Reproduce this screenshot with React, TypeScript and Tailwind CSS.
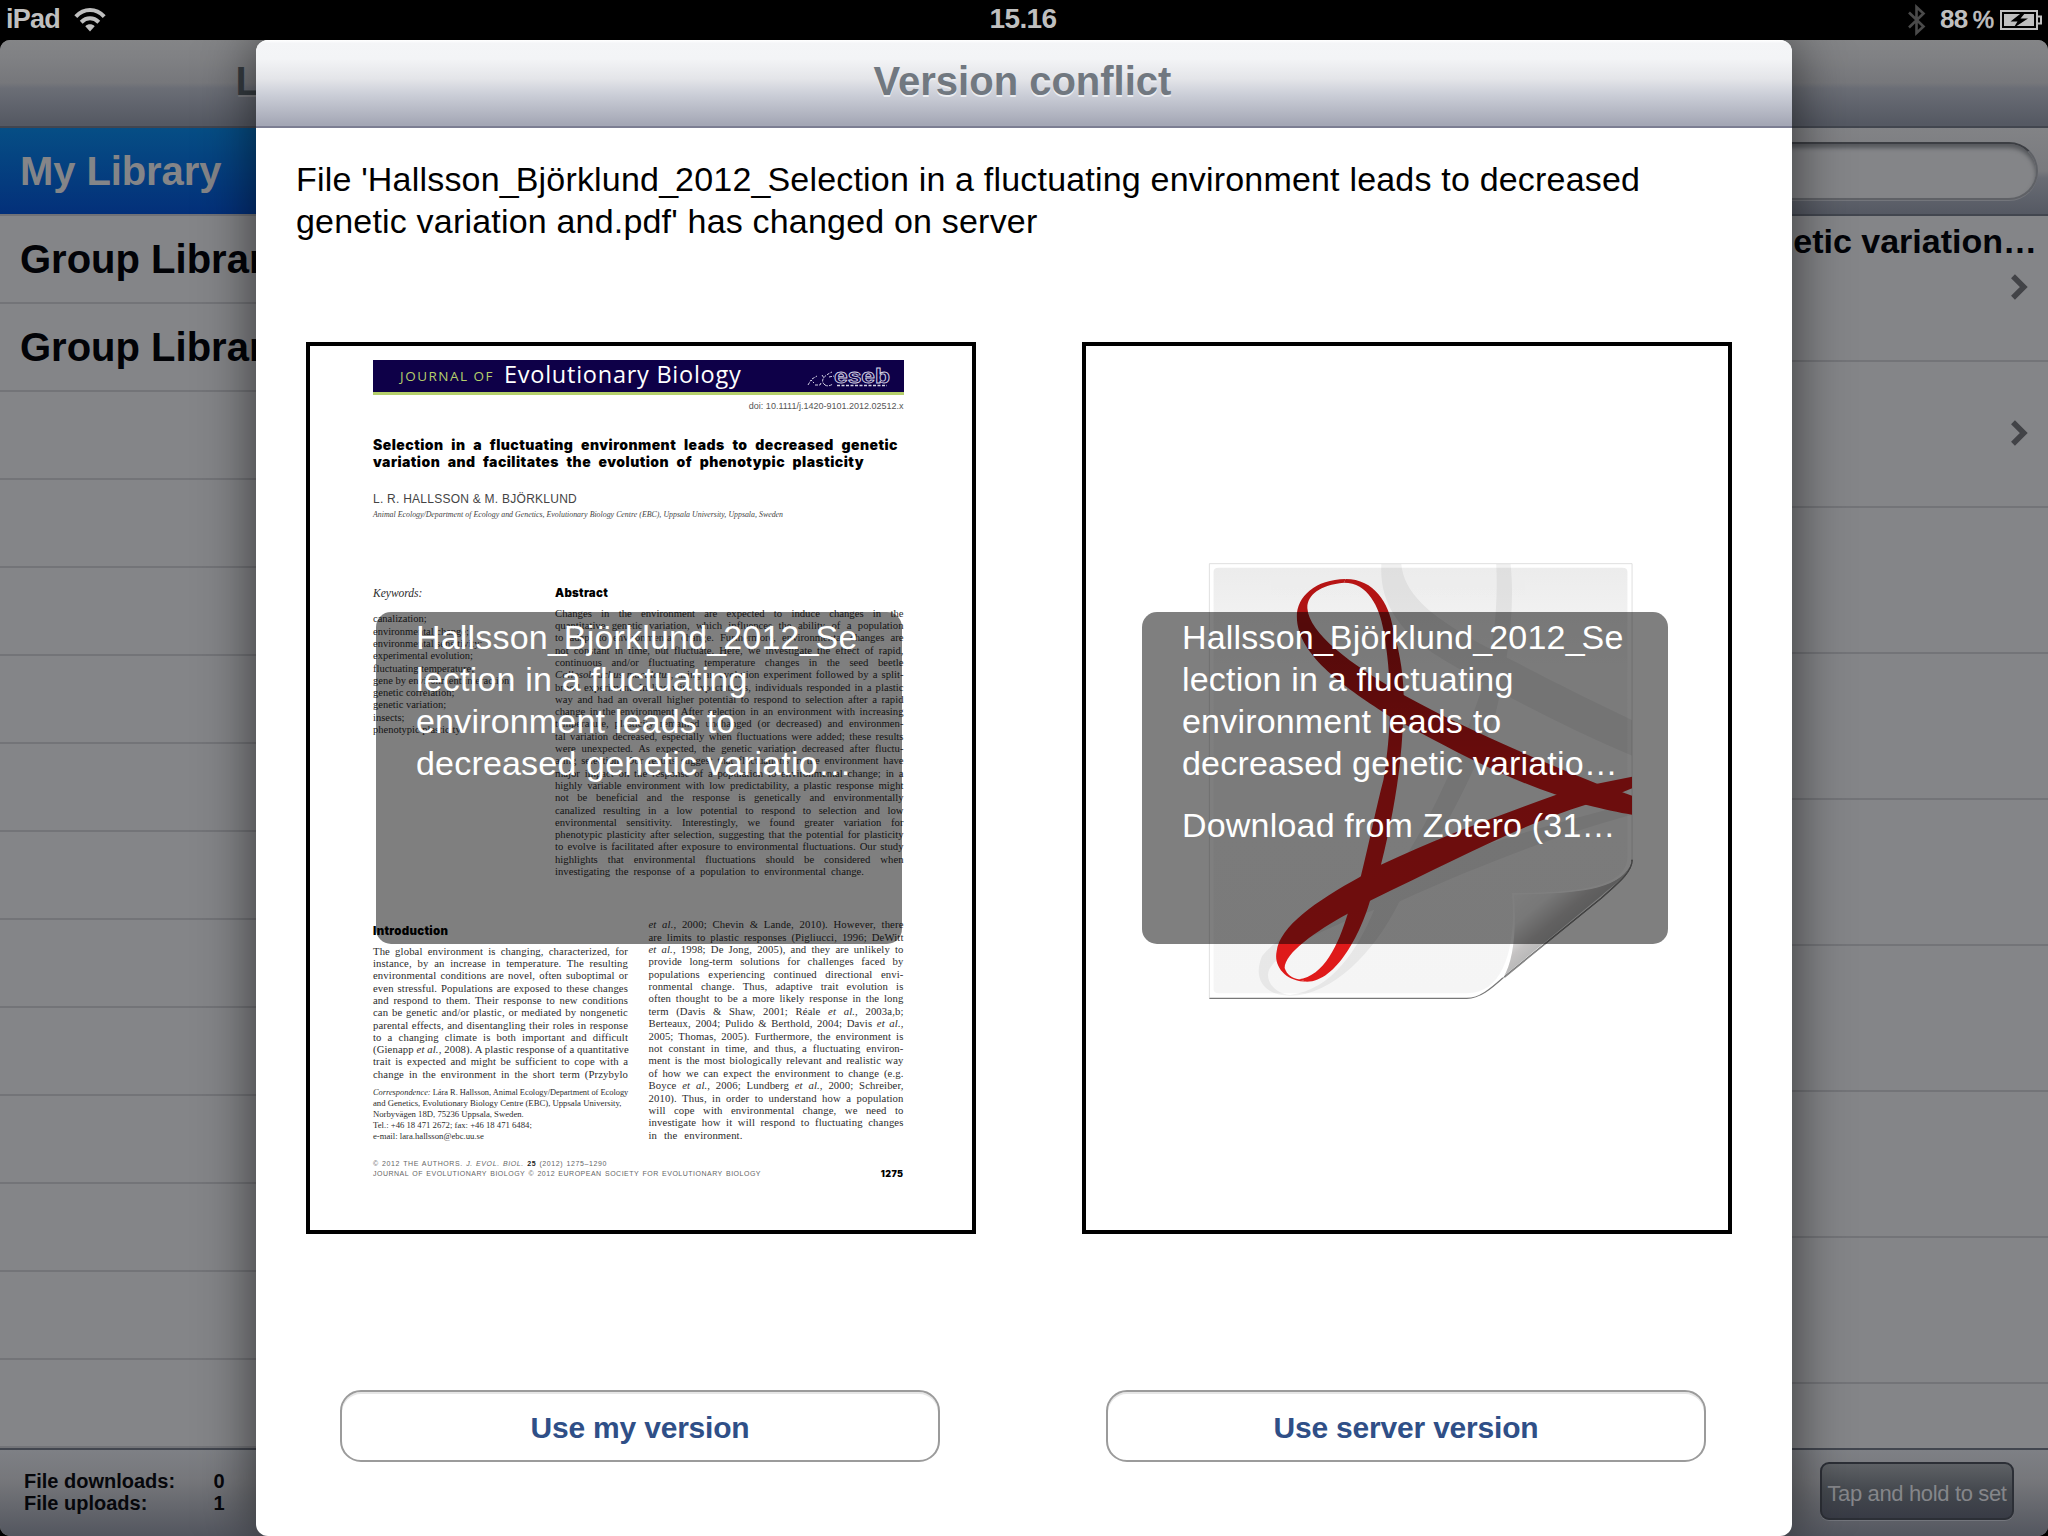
import React from "react";

const sans = "font-['Liberation_Sans',Arial,sans-serif]";
const serif = "font-['Liberation_Serif','Times_New_Roman',serif]";
const heavy = "font-['Inter',sans-serif] font-black";

const I = ({ children }: { children: React.ReactNode }) => <i className="italic">{children}</i>;

const abstractLines: React.ReactNode[] = [
  "Changes in the environment are expected to induce changes in the",
  "quantitative genetic variation, which influences the ability of a population",
  "to adapt to environmental change. Furthermore, environmental changes are",
  "not constant in time, but fluctuate. Here, we investigate the effect of rapid,",
  "continuous and/or fluctuating temperature changes in the seed beetle",
  <><I>Callosobruchus maculatus</I>, using an evolution experiment followed by a split-</>,
  "brood experiment. In line with expectations, individuals responded in a plastic",
  "way and had an overall higher potential to respond to selection after a rapid",
  "change in the environment. After selection in an environment with increasing",
  "temperature, plasticity remained unchanged (or decreased) and environmen-",
  "tal variation decreased, especially when fluctuations were added; these results",
  "were unexpected. As expected, the genetic variation decreased after fluctu-",
  "ating selection. Our results suggest that fluctuations in the environment have",
  "major impact on the response of a population to environmental change; in a",
  "highly variable environment with low predictability, a plastic response might",
  "not be beneficial and the response is genetically and environmentally",
  "canalized resulting in a low potential to respond to selection and low",
  "environmental sensitivity. Interestingly, we found greater variation for",
  "phenotypic plasticity after selection, suggesting that the potential for plasticity",
  "to evolve is facilitated after exposure to environmental fluctuations. Our study",
  "highlights that environmental fluctuations should be considered when",
];

const keywords = [
  "canalization;",
  "environmental change;",
  "environmental sensitivity;",
  "experimental evolution;",
  "fluctuating temperature;",
  "gene by environment interaction;",
  "genetic correlation;",
  "genetic variation;",
  "insects;",
  "phenotypic plasticity.",
];

const introLeft: React.ReactNode[] = [
  "The global environment is changing, characterized, for",
  "instance, by an increase in temperature. The resulting",
  "environmental conditions are novel, often suboptimal or",
  "even stressful. Populations are exposed to these changes",
  "and respond to them. Their response to new conditions",
  "can be genetic and/or plastic, or mediated by nongenetic",
  "parental effects, and disentangling their roles in response",
  "to a changing climate is both important and difficult",
  <>(Gienapp <I>et al.</I>, 2008). A plastic response of a quantitative</>,
  "trait is expected and might be sufficient to cope with a",
  "change in the environment in the short term (Przybylo",
];

const introRight: React.ReactNode[] = [
  <><I>et al.</I>, 2000; Chevin &amp; Lande, 2010). However, there</>,
  "are limits to plastic responses (Pigliucci, 1996; DeWitt",
  <><I>et al.</I>, 1998; De Jong, 2005), and they are unlikely to</>,
  "provide long-term solutions for challenges faced by",
  "populations experiencing continued directional envi-",
  "ronmental change. Thus, adaptive trait evolution is",
  "often thought to be a more likely response in the long",
  <>term (Davis &amp; Shaw, 2001; Réale <I>et al.</I>, 2003a,b;</>,
  <>Berteaux, 2004; Pulido &amp; Berthold, 2004; Davis <I>et al.</I>,</>,
  "2005; Thomas, 2005). Furthermore, the environment is",
  "not constant in time, and thus, a fluctuating environ-",
  "ment is the most biologically relevant and realistic way",
  "of how we can expect the environment to change (e.g.",
  <>Boyce <I>et al.</I>, 2006; Lundberg <I>et al.</I>, 2000; Schreiber,</>,
  "2010). Thus, in order to understand how a population",
  "will cope with environmental change, we need to",
  "investigate how it will respond to fluctuating changes",
];

function Lines({ lines, last, lastWidth }: { lines: React.ReactNode[]; last?: string; lastWidth?: string }) {
  return (
    <>
      {lines.map((l, i) => (
        <div key={i} className="whitespace-nowrap [text-align-last:justify]">{l}</div>
      ))}
      {last && <div className={`whitespace-nowrap [text-align-last:justify] ${lastWidth ?? ""}`}>{last}</div>}
    </>
  );
}

/* Body text whose underscores are set tighter than the letters. */
function Name({ text }: { text: string }) {
  return (
    <>
      {text.split("_").map((part, i) => (
        <React.Fragment key={i}>
          {i > 0 && <span className="tracking-[-3px]">_</span>}
          {part}
        </React.Fragment>
      ))}
    </>
  );
}

function StatusBar() {
  return (
    <header className="flex h-10 items-center justify-between bg-black pl-[6px] pr-[6px] text-[28px] font-bold text-[#bfbfbf]">
      <div className="flex w-[400px] items-center">
        <span className="relative -top-px w-[55px] text-[27px] tracking-[-0.8px]">iPad</span>
        <svg className="ml-[13px] h-6 w-8" viewBox="0 0 32 24" fill="none" stroke="#bfbfbf" strokeWidth="4">
          <path d="M1.8 8.6C10-.2 22-.2 30.200 8.600" />
          <path d="M7.200 14.200C12.500 9 19.500 9 24.800 14.200" />
          <path d="M16 23.500L11.300 18.200C14 15.600 18 15.600 20.700 18.200Z" fill="#bfbfbf" stroke="none" />
        </svg>
      </div>
      <span className="relative -top-px right-px tracking-[-0.6px]">15.16</span>
      <div className="flex w-[400px] items-center justify-end">
        <svg className="mr-[13px] h-8 w-5" viewBox="0 0 20 32" fill="none" stroke="#4a4a4a" strokeWidth="2.600">
          <path d="M2 8.500L16.500 22.500L9.500 29V3L16.500 9.500L2 23.500" />
        </svg>
        <div className="relative -top-px mr-[6px] flex items-baseline gap-[5px] whitespace-nowrap text-[26px]">
          <span className="tracking-[-0.6px]">88</span>
          <span className="text-[24px] font-normal [-webkit-text-stroke:0.7px_#bfbfbf]">%</span>
        </div>
        <svg className="h-5 w-[42px]" viewBox="0 0 42 20">
          <path d="M1 1H37V19H1Z" fill="none" stroke="#bfbfbf" strokeWidth="2" />
          <path d="M4 4H34V16H4Z" fill="#bfbfbf" />
          <path d="M38 6.500H41V13.500H38" fill="none" stroke="#bfbfbf" strokeWidth="2" />
          <path d="M22 2.500L10.500 11.500H17.500L13.500 18L28 8.500H20.500L25.500 2.500Z" fill="#000" />
        </svg>
      </div>
    </header>
  );
}

const NAV_BG = "bg-[linear-gradient(180deg,#848587_0%,#808184_20%,#76777b_50%,#6b6e76_56%,#555963_97%)]";

function Sidebar() {
  return (
    <aside className="flex w-[640px] flex-col bg-[#848588]">
      <div className={`flex h-[88px] items-center justify-center border-b-2 border-[#42454f] pb-[5px] text-[40px] font-bold text-[#363c41] ${NAV_BG} [text-shadow:0_2px_0_#7d7e82]`}>
        Libraries
      </div>
      <div className="flex h-[88px] items-center border-b-2 border-[#717277] bg-[linear-gradient(180deg,#064e85,#03307a)] pl-5 text-[40px] font-bold tracking-[-0.1px] text-[#848588]">
        My Library
      </div>
      {["Group Library", "Group Library", "", "", "", "", "", "", "", "", "", "", "", ""].map((t, i) => (
        <div key={i} className="flex h-[88px] items-center border-b-2 border-[#737478] pl-5 text-[40px] font-bold text-[#020307]">
          {t}
        </div>
      ))}
      <footer className="flex h-[88px] flex-col border-t-2 border-[#42464f] bg-[linear-gradient(180deg,#7e8085,#76777b_35%,#53565f)] pl-[24px] pt-[20px] text-[20px] font-bold leading-[22px] text-[#06070b]">
        <div className="flex">
          <span className="w-[189.500px]">File downloads:</span>
          <span>0</span>
        </div>
        <div className="flex">
          <span className="w-[189.500px]">File uploads:</span>
          <span>1</span>
        </div>
      </footer>
    </aside>
  );
}

function Chevron() {
  return (
    <svg className="h-[26px] w-[18px]" viewBox="0 0 18 26" fill="none" stroke="#424347" strokeWidth="5.500">
      <path d="M2 2.200L12.800 13L2 23.800" />
    </svg>
  );
}

function Detail() {
  return (
    <main className="flex flex-1 flex-col bg-[#848588]">
      <div className={`h-[88px] border-b-2 border-[#42464f] ${NAV_BG}`} />
      <div className="flex h-[88px] items-center border-b-2 border-[#42464f] bg-[linear-gradient(180deg,#828386_0%,#797a7e_50%,#696c74_58%,#555963_100%)] pl-10 pr-[10px]">
        <div className="h-[58px] flex-1 rounded-full border-2 border-[#5f6166] border-t-[#3c3e43] bg-[#848588] shadow-[inset_0_4px_4px_#56585c,0_1px_0_#73757b]" />
      </div>
      {["genetic variation…", "", "", "", "", "", "", ""].map((t, i) => (
        <div key={i} className="flex h-[146px] flex-col items-end border-b-2 border-[#737478]">
          <div className="h-[50px] pr-[11px] pt-[6px] text-[34px] font-bold leading-[39px] text-[#020307]">{t}</div>
          {i < 2 && (
            <div className="mr-[19px] mt-[8px]">
              <Chevron />
            </div>
          )}
        </div>
      ))}
      <div className="flex-1" />
      <footer className="flex h-[88px] justify-end border-t-2 border-[#42464f] bg-[linear-gradient(180deg,#7e8085,#76777b_35%,#53565f)] pr-[34px] pt-3">
        <div className="flex h-[58px] w-[194px] items-center justify-center whitespace-nowrap rounded-[9px] border-2 border-[#2c2f36] bg-[linear-gradient(180deg,#5e6165,#44484e_50%,#383b45)] pt-[5px] text-[22px] tracking-[-0.35px] text-[#85868a] shadow-[0_1px_0_#73757c]">
          Tap and hold to set
        </div>
      </footer>
    </main>
  );
}

function EsebLogo() {
  return (
    <svg className="-mt-[3px] h-6 w-[84px]" viewBox="0 0 84 24" fill="none" stroke="#d6d4e6" strokeWidth="1">
      <path d="M1 22L4 17L7 20M5 16L10 13M8 22H13L14 20M15 12L17 15M18 22C13 18 16 13 25 9M18 22C21 24 24 22 26 21M22 14L27 13" strokeDasharray="3 1.200" />
      <text x="27" y="19.500" fontSize="19.500" fontWeight="bold" textLength="56" lengthAdjust="spacingAndGlyphs" stroke="#d6d4e6" strokeWidth=".8" fill="#0e0048" fontFamily="Liberation Sans, sans-serif">eseb</text>
      <path d="M30 22.500H80" strokeWidth="1.300" strokeDasharray="3 1.500" />
    </svg>
  );
}

function Paper() {
  return (
    <div className={`flex flex-col pl-[63px] pr-[68.500px] text-[#2c2c2c] ${serif}`}>
      <div className="mt-[14px] flex h-[35px] items-center border-b-[3px] border-[#b5cf6b] bg-[#0e0048] pl-[27px] pr-[13px]">
        <span className="mt-px w-[104px] whitespace-nowrap font-['Open_Sans',sans-serif] text-[13.500px] font-medium tracking-[1.500px] text-[#b5cf6b]">JOURNAL OF</span>
        <span className="-mt-[3px] flex-1 whitespace-nowrap font-['Open_Sans',sans-serif] text-[23.500px] font-medium tracking-[0.75px] text-white">Evolutionary Biology</span>
        <EsebLogo />
      </div>
      <div className={`mt-[4.500px] text-right text-[9px] leading-[12px] text-[#555] ${sans}`}>doi: 10.1111/j.1420-9101.2012.02512.x</div>
      <div className={`mt-[24.500px] whitespace-nowrap text-[14px] leading-[17px] tracking-[0.45px] text-black ${heavy}`}>
        <div className="w-[525px] [text-align-last:justify]">Selection in a fluctuating environment leads to decreased genetic</div>
        <div className="w-[491px] [text-align-last:justify]">variation and facilitates the evolution of phenotypic plasticity</div>
      </div>
      <div className={`mt-[21.900px] text-[12px] leading-[14px] tracking-[0.25px] text-[#444] ${sans}`}>L. R. HALLSSON &amp; M. BJÖRKLUND</div>
      <div className="mt-[4.300px] w-[410px] whitespace-nowrap text-[7.850px] italic leading-[10px] text-[#444] [text-align-last:justify]">
        Animal Ecology/Department of Ecology and Genetics, Evolutionary Biology Centre (EBC), Uppsala University, Uppsala, Sweden
      </div>
      <div className="mt-[66px] flex">
        <div className="w-[182px]">
          <div className="text-[11.500px] italic leading-[14px]">Keywords:</div>
          <div className="mt-[13px] text-[10.500px] leading-[12.330px]">
            {keywords.map((k) => (
              <div key={k}>{k}</div>
            ))}
          </div>
        </div>
        <div className="flex-1">
          <div className={`text-[11.500px] leading-[14px] tracking-[0.25px] text-black ${heavy}`}>Abstract</div>
          <div className="mt-[6.600px] text-[10.700px] leading-[12.300px]">
            <Lines lines={abstractLines} last="investigating the response of a population to environmental change." lastWidth="w-[309px]" />
          </div>
        </div>
      </div>
      <div className="mt-[40.800px] flex justify-between">
        <div className="w-[255px]">
          <div className={`mt-[5.900px] text-[11.500px] leading-[14px] tracking-[0.3px] text-black ${heavy}`}>Introduction</div>
          <div className="mt-[6.900px] text-[10.700px] leading-[12.280px] tracking-[0.12px]">
            <Lines lines={introLeft} />
          </div>
          <div className="mt-[7.800px] whitespace-nowrap text-[8.700px] leading-[10.700px]">
            <div className="text-[8.350px] [text-align-last:justify]"><I>Correspondence:</I> Lára R. Hallsson, Animal Ecology/Department of Ecology</div>
            <div>and Genetics, Evolutionary Biology Centre (EBC), Uppsala University,</div>
            <div>Norbyvägen 18D, 75236 Uppsala, Sweden.</div>
            <div>Tel.: +46 18 471 2672; fax: +46 18 471 6484;</div>
            <div>e-mail: lara.hallsson@ebc.uu.se</div>
          </div>
        </div>
        <div className="w-[255px] text-[10.700px] leading-[12.390px] tracking-[0.12px]">
          <Lines lines={introRight} last="in the environment." lastWidth="w-[94px]" />
        </div>
      </div>
      <div className={`mt-[18.200px] flex items-end justify-between text-[7px] leading-[9.300px] text-[#666] ${sans}`}>
        <div>
          <div className="w-[234px] whitespace-nowrap tracking-[0.6px] [text-align-last:justify]">© 2012 THE AUTHORS. <I>J. EVOL. BIOL.</I> <b className="text-[#222]">25</b> (2012) 1275–1290</div>
          <div className="w-[388px] whitespace-nowrap tracking-[0.5px] [text-align-last:justify]">JOURNAL OF EVOLUTIONARY BIOLOGY © 2012 EUROPEAN SOCIETY FOR EVOLUTIONARY BIOLOGY</div>
        </div>
        <div className={`text-[9px] tracking-[0.4px] text-black ${heavy}`}>1275</div>
      </div>
    </div>
  );
}

function PdfIcon() {
  return (
    <svg className="h-[443px] w-[429px]" viewBox="300 60 1020 1330" preserveAspectRatio="none">
      <defs>
        <linearGradient id="page" x1="0" y1="0" x2="0" y2="1">
          <stop offset="0" stopColor="#ececec" />
          <stop offset=".25" stopColor="#f7f7f7" />
          <stop offset="1" stopColor="#f5f5f5" />
        </linearGradient>
        <linearGradient id="red" gradientUnits="userSpaceOnUse" x1="0" y1="117" x2="0" y2="1326">
          <stop offset="0" stopColor="#b81414" />
          <stop offset=".12" stopColor="#a81414" />
          <stop offset=".5" stopColor="#d81a1a" />
          <stop offset="1" stopColor="#e01a1a" />
        </linearGradient>
        <linearGradient id="curl" gradientUnits="userSpaceOnUse" x1="1030" y1="1070" x2="1140" y2="1175">
          <stop offset="0" stopColor="#fafafa" />
          <stop offset=".4" stopColor="#f0f0f0" />
          <stop offset=".8" stopColor="#c4c2c2" />
          <stop offset="1" stopColor="#b9b9b9" />
        </linearGradient>
        <clipPath id="sheet">
          <path d="M308 71H1313V960C1313 1000 1270 1040 1240 1075L1010 1310C975 1350 950 1374 920 1374H308Z" />
        </clipPath>
      </defs>
      <path d="M308 71H1313V960C1313 1000 1270 1040 1240 1075L1010 1310C975 1350 950 1376 920 1376H308Z" fill="#fff" />
      <path d="M308 1374V71H1313V960" fill="none" stroke="#d4d4d4" strokeWidth="2" />
      <path d="M1313 960C1313 1000 1270 1040 1240 1075L1010 1310C975 1350 950 1376 920 1376H308" fill="none" stroke="#777" strokeWidth="3.500" />
      <g clipPath="url(#sheet)">
        <path d="M330 83H1290Q1302 83 1302 95V950C1302 1020 1240 1060 1030 1062C1036 1220 1010 1360 920 1361H330Q318 1361 318 1349V95Q318 83 330 83Z" fill="url(#page)" />
        <g fill="#000" opacity=".055">
          <path d="M717 69C712 180 750 260 840 340C980 450 1150 560 1313 648V540C1180 460 1040 370 950 310C830 225 770 160 764 69Z" />
          <path d="M990 69C995 200 985 330 955 450C900 650 850 800 770 960L700 1090L760 1085C830 950 920 760 985 540C1020 360 1035 200 1024 69Z" />
          <path d="M1313 790C1130 850 950 910 770 1010C640 1080 480 1170 433 1250C410 1320 440 1368 500 1368C600 1366 700 1240 760 1085C960 970 1150 880 1313 825ZM700 1110C660 1230 600 1350 500 1366C460 1360 440 1320 450 1290C480 1220 600 1160 700 1110Z" fillRule="evenodd" />
        </g>
        <g fill="url(#red)">
          <path d="M632 117C700 117 735 190 744 262C756 320 769 385 770 465C770 620 755 780 716 975C705 1030 700 1050 690 1083C668 1180 610 1326 540 1326L520 1319C580 1310 615 1215 637 1122C645 1090 660 1050 668 1010C690 900 705 800 722 720C732 640 735 590 737 530C740 440 732 340 722 270C712 200 685 128 628 128Z" />
          <path d="M632 117C560 118 516 170 516 230C516 350 640 450 737 530C850 605 980 700 1133 765L1203 795C1250 810 1280 818 1313 825V768L1290 757L1230 732C1060 645 890 550 770 465C640 370 545 280 541 205C540 165 570 135 628 128Z" />
          <path d="M1313 711L1230 732L1133 765C1000 825 850 895 716 975L668 1010C560 1085 475 1160 468 1235C460 1280 490 1326 540 1326L520 1319C505 1315 492 1305 487 1285C487 1240 560 1175 637 1122L690 1083C890 960 1060 850 1203 795L1290 757L1313 745Z" />
        </g>
      </g>
      <path d="M1313 960C1295 1040 1210 1062 1030 1062C1036 1170 1030 1260 1005 1313L1240 1068C1280 1025 1310 1000 1313 960Z" fill="url(#curl)" />
      <path d="M1311 965C1290 1040 1210 1062 1030 1062C1036 1170 1030 1260 1005 1313" fill="none" stroke="#fff" strokeWidth="4" />
      <path d="M1313 960C1313 1000 1275 1035 1245 1070L1010 1313" fill="none" stroke="#888" strokeWidth="2.500" />
    </svg>
  );
}

function Overlay({ download, inset }: { download?: boolean; inset: string }) {
  return (
    <div className={`absolute top-[266px] h-[332px] w-[526px] rounded-[15px] bg-black/50 pt-[4px] text-[34px] leading-[42px] tracking-[0.19px] text-white ${inset}`}>
      {["Hallsson_Björklund_2012_Se", "lection in a fluctuating", "environment leads to", "decreased genetic variatio…"].map((t) => (
        <div key={t} className="whitespace-nowrap"><Name text={t} /></div>
      ))}
      {download && <div className="mt-[20px] whitespace-nowrap">Download from Zotero (31…</div>}
    </div>
  );
}

function ActionButton({ label }: { label: string }) {
  return (
    <button className="flex h-[72px] w-[600px] items-center justify-center rounded-[21px] border-2 border-[#9b9b9b] bg-white pt-[3px] text-[30px] font-bold tracking-[-0.2px] text-[#2f4f87] shadow-[inset_0_2px_0_#e6e6e6]">
      {label}
    </button>
  );
}

function Modal() {
  return (
    <section className="absolute left-[256px] top-10 flex h-[1496px] w-[1536px] flex-col overflow-hidden rounded-[12px] bg-white">
      <div className="flex h-[88px] items-center justify-center border-b-2 border-[#7c7e92] bg-[linear-gradient(180deg,#fff_0%,#f4f5f7_4%,#f3f4f6_22%,#e4e5e9_45%,#cdd0d9_62%,#a4a7b5_98%)] pb-[5px] pr-[3px] text-[40px] font-bold text-[#717880] [text-shadow:0_2px_0_#eceef2]">
        Version conflict
      </div>
      <p className="mt-[30px] whitespace-nowrap pl-10 text-[34px] leading-[42px] tracking-[0.19px] text-black">
        <Name text="File 'Hallsson_Björklund_2012_Selection in a fluctuating environment leads to decreased" />
        <br />
        genetic variation and.pdf' has changed on server
      </p>
      <div className="mt-[100px] flex h-[892px] gap-[106px] pl-[50px]">
        <div className="relative w-[670px] border-4 border-black">
          <Paper />
          <Overlay inset="left-[66px] pl-[40px]" />
        </div>
        <div className="relative w-[650px] border-4 border-black">
          <div className="pl-[120px] pt-[214px]">
            <PdfIcon />
          </div>
          <Overlay download inset="left-[56px] pl-[40px]" />
        </div>
      </div>
      <div className="mt-[156px] flex gap-[166px] pl-[84px]">
        <ActionButton label="Use my version" />
        <ActionButton label="Use server version" />
      </div>
    </section>
  );
}

export default function App() {
  return (
    <div className={`relative flex h-[1536px] w-[2048px] flex-col overflow-hidden bg-black ${sans}`}>
      <StatusBar />
      <div className="relative flex flex-1 overflow-hidden rounded-[10px]">
        <Sidebar />
        <Detail />
        <div className="absolute left-[256px] top-0 h-[1496px] w-[1536px] rounded-[12px] shadow-[0_0_56px_rgba(0,0,0,0.6)]" />
      </div>
      <Modal />
    </div>
  );
}
